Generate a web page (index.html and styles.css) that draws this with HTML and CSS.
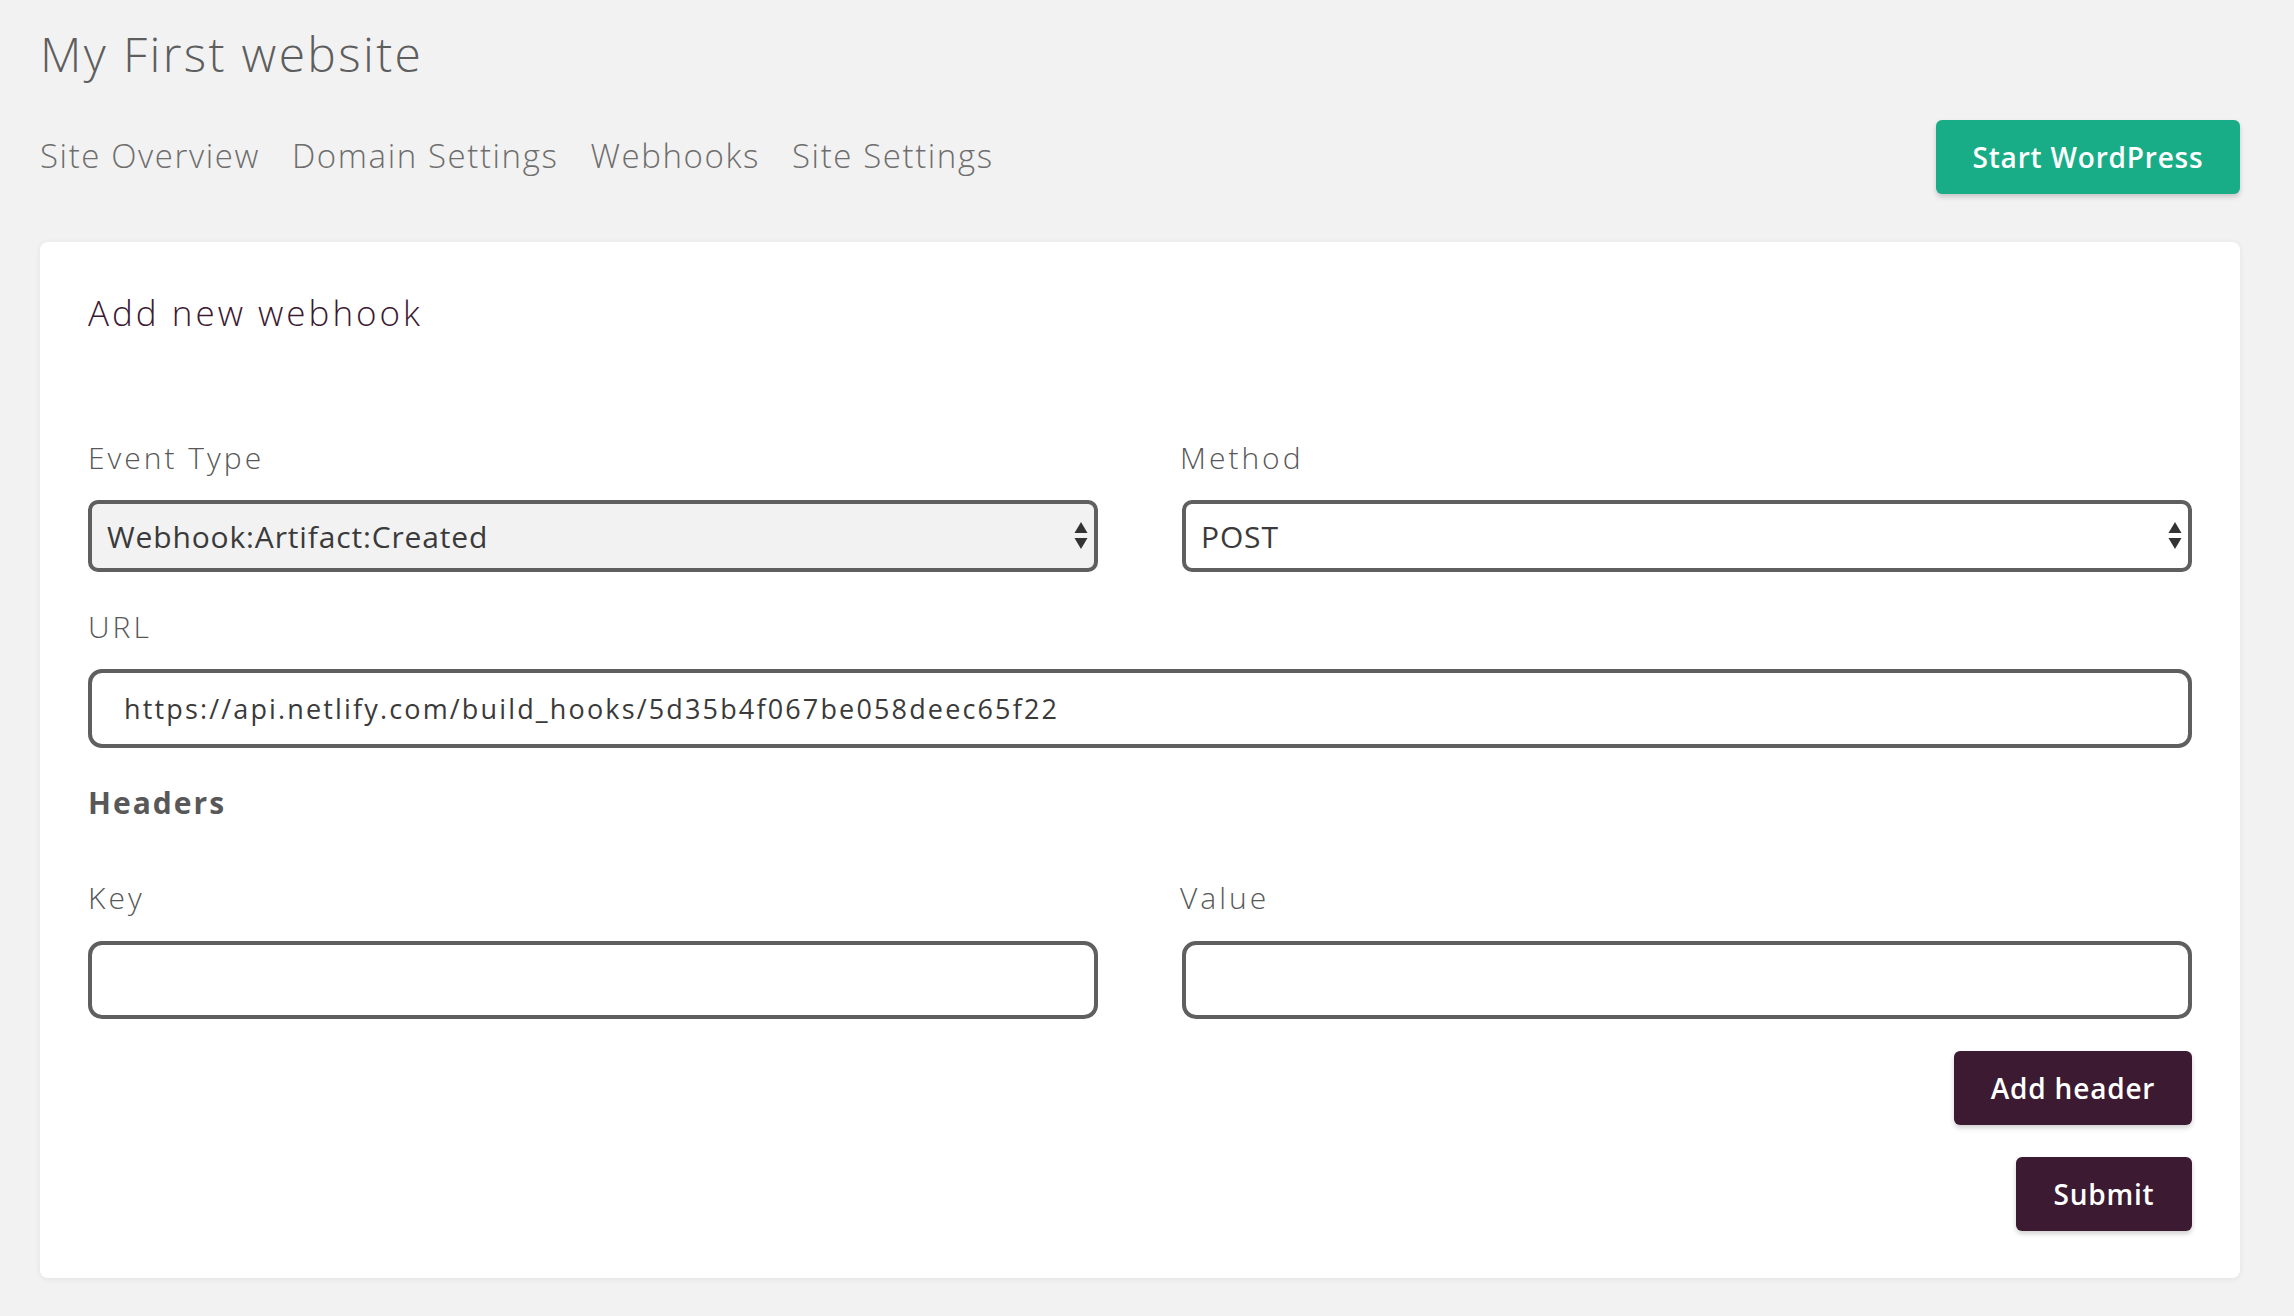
FILE: index.html
```html
<!DOCTYPE html>
<html lang="en">
<head>
<meta charset="utf-8">
<title>My First website – Webhooks</title>
<link rel="stylesheet" href="styles.css">
</head>
<body>
<div class="page">
  <header class="site-header">
    <h1 class="site-title">My First website</h1>
    <div class="toolbar">
      <nav class="tabs">
        <a class="tab tab-1" href="#">Site Overview</a>
        <a class="tab tab-2" href="#">Domain Settings</a>
        <a class="tab tab-3" href="#">Webhooks</a>
        <a class="tab tab-4" href="#">Site Settings</a>
      </nav>
      <button class="btn btn-green" type="button">Start WordPress</button>
    </div>
  </header>

  <main class="card">
    <h2 class="card-title">Add new webhook</h2>

    <div class="row row-event">
      <div class="field">
        <label class="label label-event">Event Type</label>
        <div class="select-wrap">
          <select class="control select select-muted">
            <option>Webhook:Artifact:Created</option>
          </select>
          <svg class="select-arrows" width="14" height="28" viewBox="0 0 14 28" aria-hidden="true">
            <polygon points="7,0 13.5,11 0.5,11" fill="#333"/>
            <polygon points="0.5,16 13.5,16 7,27" fill="#333"/>
          </svg>
        </div>
      </div>
      <div class="field">
        <label class="label label-method">Method</label>
        <div class="select-wrap">
          <select class="control select">
            <option>POST</option>
          </select>
          <svg class="select-arrows" width="14" height="28" viewBox="0 0 14 28" aria-hidden="true">
            <polygon points="7,0 13.5,11 0.5,11" fill="#333"/>
            <polygon points="0.5,16 13.5,16 7,27" fill="#333"/>
          </svg>
        </div>
      </div>
    </div>

    <div class="field field-url">
      <label class="label label-url">URL</label>
      <input class="control input input-url" type="text" value="https://api.netlify.com/build_hooks/5d35b4f067be058deec65f22">
    </div>

    <h3 class="section-title">Headers</h3>

    <div class="row row-headers">
      <div class="field">
        <label class="label label-key">Key</label>
        <input class="control input input-kv" type="text">
      </div>
      <div class="field">
        <label class="label label-value">Value</label>
        <input class="control input input-kv" type="text">
      </div>
    </div>

    <div class="actions">
      <button class="btn btn-dark btn-add" type="button">Add header</button>
      <button class="btn btn-dark btn-submit" type="button">Submit</button>
    </div>
  </main>
</div>
</body>
</html>
```

FILE: styles.css
```css
* {
  box-sizing: border-box;
}

html, body {
  margin: 0;
  padding: 0;
  background: #f2f2f2;
}

body {
  font-family: "Open Sans", "Noto Sans", "DejaVu Sans", sans-serif;
  color: #5a5a5a;
  width: 2294px;
  height: 1316px;
  overflow: hidden;
}

.page {
  padding: 30px 54px 0 40px;
}

/* ---------- header ---------- */
.site-title {
  margin: 0;
  font-size: 48px;
  line-height: 48px;
  font-weight: 300;
  letter-spacing: 2.35px;
  color: #5e5e5e;
}

.toolbar {
  margin-top: 42px;
  height: 74px;
  display: flex;
  align-items: center;
  justify-content: space-between;
}

.tabs {
  display: flex;
  align-items: center;
  gap: 32px;
  margin-top: -3px;
}

.tab {
  font-size: 33px;
  line-height: 33px;
  font-weight: 300;
  letter-spacing: 1.6px;
  color: #6e6e6e;
  text-decoration: none;
}

/* ---------- buttons ---------- */
.btn {
  font-family: "Open Sans", "Noto Sans", "DejaVu Sans", sans-serif;
  font-size: 28px;
  font-weight: 600;
  letter-spacing: 0.8px;
  color: #fff;
  border: 0;
  border-radius: 6px;
  height: 74px;
  padding: 0 36px;
  display: inline-flex;
  align-items: center;
  justify-content: center;
  box-shadow: 0 3px 5px rgba(0, 0, 0, 0.18);
  cursor: pointer;
}

.btn-green {
  background: #19ad87;
  width: 304px;
}

.btn-dark {
  background: #3c1a32;
}

.btn-add {
  width: 238px;
}

.btn-submit {
  width: 176px;
}

/* ---------- card ---------- */
.card {
  margin-top: 48px;
  background: #fff;
  border-radius: 8px;
  box-shadow: 0 1px 6px rgba(0, 0, 0, 0.07);
  padding: 53px 48px 47px 48px;
}

.card-title {
  margin: 0;
  font-size: 35px;
  line-height: 35px;
  font-weight: 300;
  letter-spacing: 3px;
  color: #3c1a32;
}

.row {
  display: grid;
  grid-template-columns: 1fr 1fr;
  column-gap: 84px;
}

.row-event {
  margin-top: 113px;
}

.field {
  display: flex;
  flex-direction: column;
  align-items: stretch;
}

.field-url {
  margin-top: 40px;
}

.label {
  display: block;
  font-size: 30px;
  line-height: 30px;
  font-weight: 300;
  letter-spacing: 3px;
  color: #585858;
  margin-bottom: 27px;
}

.row .field + .field .label {
  margin-left: -2px;
}

.control {
  font-family: "Open Sans", "Noto Sans", "DejaVu Sans", sans-serif;
  border: 4px solid #5f5f5f;
  color: #3a3a3a;
  background: #fff;
  outline: none;
  margin: 0;
  width: 100%;
}

.select-wrap {
  position: relative;
}

.select {
  -webkit-appearance: none;
  appearance: none;
  height: 72px;
  border-radius: 10px;
  font-size: 30px;
  font-weight: 400;
  letter-spacing: 0.85px;
  padding: 0 40px 0 15px;
}

.select-muted {
  background: #f2f2f2;
}

.select-arrows {
  position: absolute;
  right: 10px;
  top: 22px;
  pointer-events: none;
}

.input {
  border-radius: 14px;
}

.input-url {
  height: 79px;
  font-size: 27px;
  letter-spacing: 2.15px;
  padding: 0 20px 0 32px;
}

.input-kv {
  height: 78px;
}

.section-title {
  margin: 40px 0 0 0;
  font-size: 30px;
  line-height: 30px;
  font-weight: 700;
  letter-spacing: 2px;
  color: #585858;
}

.row-headers {
  margin-top: 65px;
}

.row-headers .label {
  margin-bottom: 28px;
}

.actions {
  margin-top: 32px;
  display: flex;
  flex-direction: column;
  align-items: flex-end;
  gap: 32px;
}
```
